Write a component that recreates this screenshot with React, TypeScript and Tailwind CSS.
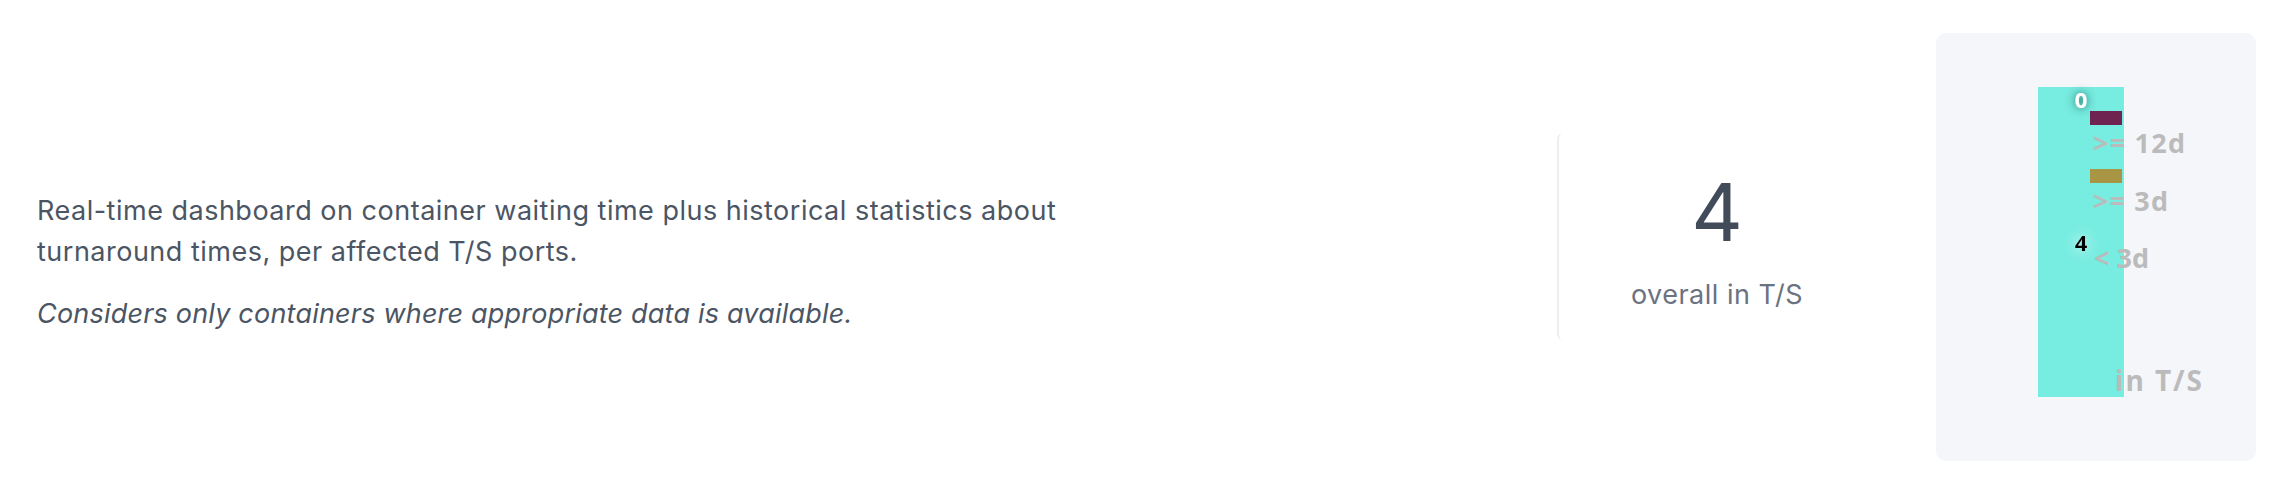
import React from 'react';

const bars = [
  { y: 78, color: '#6e2350', label: '>= 12d', labelY: 120, len: 92 },
  { y: 136, color: '#a99645', label: '>= 3d', labelY: 178, len: 75 },
];

const labelFont = "'Open Sans', 'DejaVu Sans', sans-serif";

function WaitingChart() {
  return (
    <svg width="320" height="428" viewBox="0 0 320 428">
      <defs>
        <filter id="darkGlow" x="-100%" y="-100%" width="300%" height="300%">
          <feGaussianBlur in="SourceAlpha" stdDeviation="5" result="blur" />
          <feFlood floodColor="#0b3d38" floodOpacity="0.85" />
          <feComposite in2="blur" operator="in" result="shadow" />
          <feMerge>
            <feMergeNode in="shadow" />
            <feMergeNode in="SourceGraphic" />
          </feMerge>
        </filter>
        <filter id="lightGlow" x="-150%" y="-150%" width="400%" height="400%">
          <feGaussianBlur in="SourceAlpha" stdDeviation="7" result="blur" />
          <feFlood floodColor="#ffffff" floodOpacity="1" />
          <feComposite in2="blur" operator="in" result="shadow" />
          <feMerge>
            <feMergeNode in="shadow" />
            <feMergeNode in="SourceGraphic" />
          </feMerge>
        </filter>
      </defs>

      {/* main column */}
      <rect x="102" y="54" width="86" height="310" fill="#77ece0" />
      <line x1="188.5" y1="54" x2="188.5" y2="364" stroke="#ffffff" strokeWidth="1" />

      {/* legend swatches + labels */}
      {bars.map((b) => (
        <g key={b.label}>
          <rect x="154" y={b.y} width="32" height="14" fill={b.color} />
          <text
            x="157"
            y={b.labelY}
            fill="#bbbbbb"
            fontFamily={labelFont}
            fontWeight="700"
            fontSize="27"
            textLength={b.len}
            lengthAdjust="spacing"
          >
            {b.label}
          </text>
        </g>
      ))}
      <text
        x="158"
        y="235"
        fill="#bbbbbb"
        fontFamily={labelFont}
        fontWeight="700"
        fontSize="27"
        textLength={55}
        lengthAdjust="spacing"
      >
        {'< 3d'}
      </text>
      <text
        x="179"
        y="358"
        fill="#bbbbbb"
        fontFamily={labelFont}
        fontWeight="700"
        fontSize="28"
        textLength={87}
        lengthAdjust="spacing"
      >
        in T/S
      </text>

      {/* data labels */}
      <text
        x="145"
        y="75"
        textAnchor="middle"
        fill="#ffffff"
        fontFamily={labelFont}
        fontWeight="700"
        fontSize="22"
        filter="url(#darkGlow)"
      >
        0
      </text>
      <text
        x="145"
        y="218"
        textAnchor="middle"
        fill="#000000"
        fontFamily={labelFont}
        fontWeight="700"
        fontSize="22"
        filter="url(#lightGlow)"
      >
        4
      </text>
    </svg>
  );
}

export default function App() {
  return (
    <div className="flex items-start h-[489px] w-[2280px] bg-white font-['Inter',sans-serif]">
      {/* description */}
      <div className="flex-1 pl-[37px] mt-[190px]">
        <div className="max-w-[1100px] text-[27px] leading-[41px] tracking-[0.5px] text-[#4b5563]">
          <p>
            Real-time dashboard on container waiting time plus historical statistics about
            turnaround times, per affected T/S ports.
          </p>
          <p className="mt-[21px] italic tracking-[0.2px]">
            Considers only containers where appropriate data is available.
          </p>
        </div>
      </div>

      {/* overall counter */}
      <div className="mt-[133px] w-[318px] h-[207px] border-l-2 border-[#eceef1] rounded-md flex flex-col items-center pt-[39px]">
        <div className="text-[80px] leading-none text-[#414b59]">4</div>
        <div className="mt-[27px] text-[27px] leading-[32px] tracking-[0.5px] text-[#6b7280]">overall in T/S</div>
      </div>

      {/* chart */}
      <div className="mt-[33px] ml-[61px] mr-[24px] w-[320px] h-[428px] rounded-[10px] bg-[#f5f6fa]">
        <WaitingChart />
      </div>
    </div>
  );
}
